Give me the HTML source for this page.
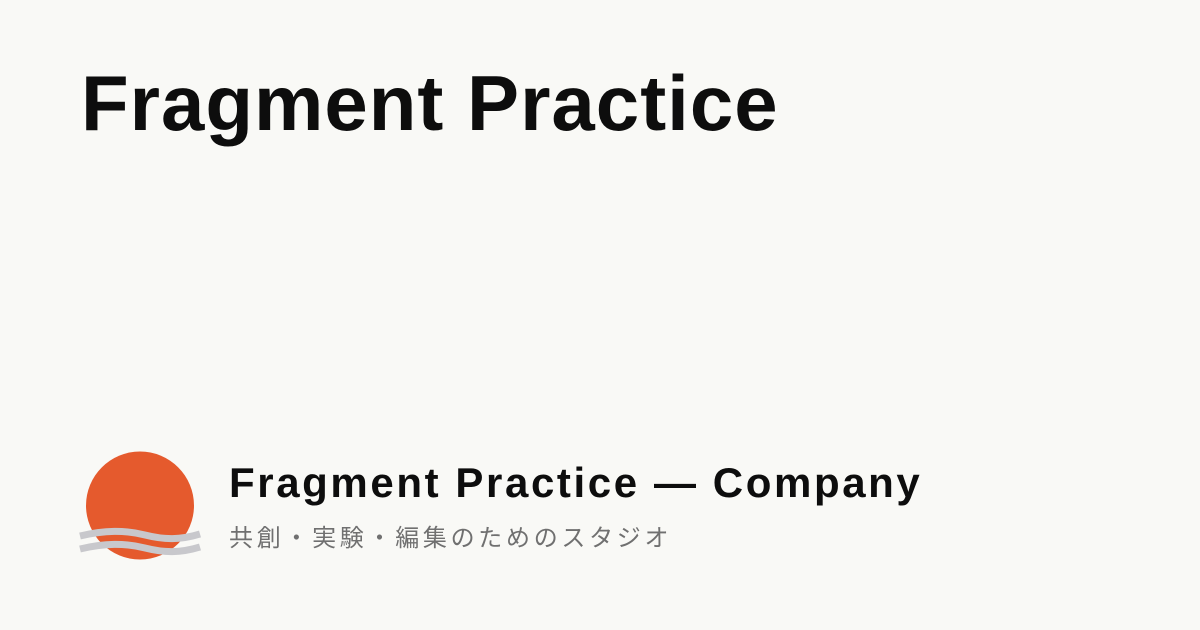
<!DOCTYPE html>
<html><head><meta charset="utf-8"><style>
html,body{margin:0;padding:0}
body{width:1200px;height:630px;background:#f9f9f6;position:relative;overflow:hidden;font-family:"Liberation Sans","Noto Sans CJK JP",sans-serif}
.h{position:absolute;left:81px;top:58px;font-size:78px;font-weight:700;color:#0d0d0d;letter-spacing:1px;line-height:90px;white-space:nowrap}
.s{position:absolute;left:229px;top:459px;font-size:42px;font-weight:700;color:#0d0d0d;letter-spacing:2.6px;line-height:48px;white-space:nowrap}
.j{position:absolute;left:229px;top:523px;font-size:24px;color:#707070;letter-spacing:3.7px;line-height:32px;white-space:nowrap}
svg{position:absolute;left:0;top:0}
</style></head><body>
<svg width="260" height="630" viewBox="0 0 260 630">
<circle cx="140" cy="505.5" r="54" fill="#e55a2d"/>
<path d="M80 536 C105 530,125 530,145 535 C165 540,180 540,200 534" stroke="#c8c8cc" stroke-width="7" fill="none"/>
<path d="M80 549 C105 543,125 543,145 548 C165 553,180 553,200 547" stroke="#c8c8cc" stroke-width="7" fill="none"/>
</svg>
<div class="h">Fragment Practice</div>
<div class="s">Fragment Practice — Company</div>
<div class="j">共創・実験・編集のためのスタジオ</div>
</body></html>
